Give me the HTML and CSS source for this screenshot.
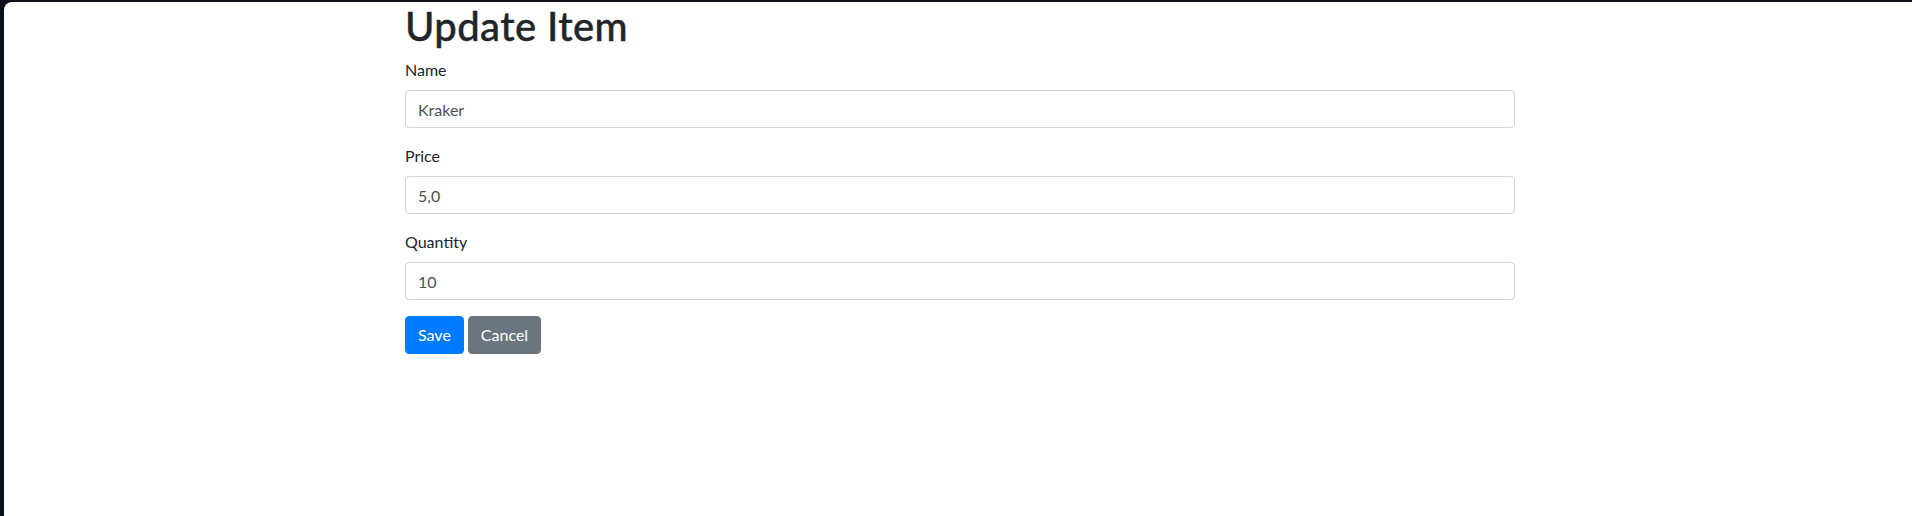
FILE: index.html
```html
<!DOCTYPE html>
<html lang="en">
<head>
<meta charset="utf-8">
<title>Update Item</title>
<link rel="stylesheet" href="styles.css">
</head>
<body>
<div class="window">
  <div class="container">
    <h1 class="title">Update Item</h1>
    <form class="form">
      <div class="form-group">
        <label class="form-label" for="name">Name</label>
        <input class="form-control" id="name" type="text" value="Kraker">
      </div>
      <div class="form-group">
        <label class="form-label" for="price">Price</label>
        <input class="form-control" id="price" type="text" value="5,0">
      </div>
      <div class="form-group">
        <label class="form-label" for="qty">Quantity</label>
        <input class="form-control" id="qty" type="text" value="10">
      </div>
      <div class="actions">
        <button type="button" class="btn btn-primary">Save</button>
        <button type="button" class="btn btn-secondary">Cancel</button>
      </div>
    </form>
  </div>
</div>
</body>
</html>
```
FILE: styles.css
```css
html, body {
  margin: 0;
  padding: 0;
  height: 100%;
  overflow: hidden;
  background: #0b0f19;
}
.window {
  margin: 2px 0 0 4px;
  width: 1912px;
  height: 514px;
  background: #fff;
  border-top-left-radius: 8px;
  font-family: "Lato", "Open Sans", sans-serif;
  font-size: 16px;
  line-height: 1.5;
  color: #212529;
}
.container {
  width: 1140px;
  box-sizing: border-box;
  padding: 0 15px;
  margin: 0 auto;
}
.title {
  margin: 0 0 8px;
  font-size: 40px;
  font-weight: 500;
  line-height: 1.2;
  letter-spacing: 0.4px;
  -webkit-text-stroke: 0.4px #212529;
}
.form-group {
  margin-bottom: 16px;
}
.form-label {
  display: block;
  margin-bottom: 8px;
}
.form-control {
  display: block;
  width: 100%;
  box-sizing: border-box;
  height: 38px;
  padding: 6px 12px;
  font: inherit;
  color: #495057;
  background: #fff;
  border: 1px solid #ced4da;
  border-radius: 4px;
  outline: none;
}
.actions {
  display: flex;
  gap: 4px;
}
.btn {
  height: 38px;
  padding: 6px 12px;
  font: inherit;
  color: #fff;
  border: 1px solid transparent;
  border-radius: 4px;
}
.btn-primary { background: #007bff; border-color: #007bff; }
.btn-secondary { background: #6c757d; border-color: #6c757d; }
```
